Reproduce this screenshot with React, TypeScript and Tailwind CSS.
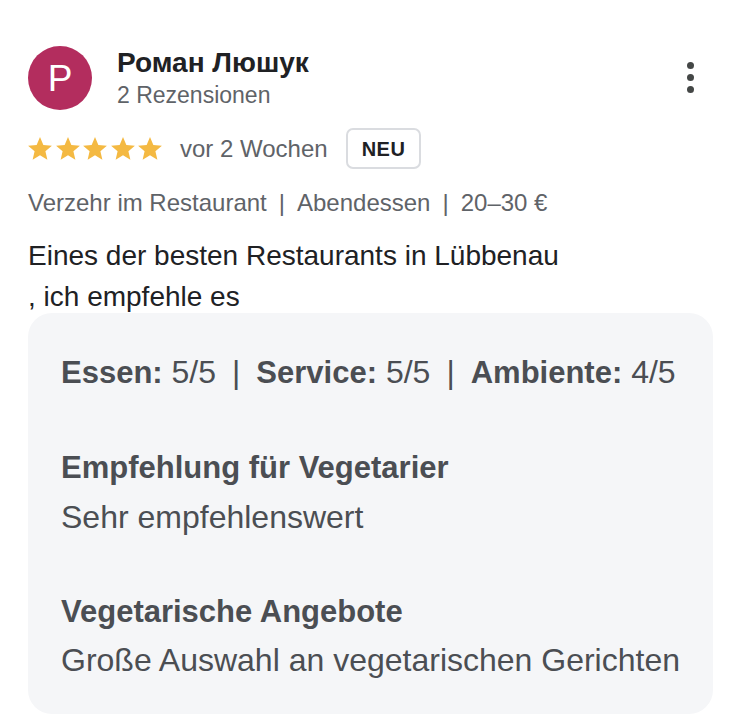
export default function App() {
  const font = { fontFamily: '"Liberation Sans", Arial, sans-serif' };
  return (
    <div className="w-[756px] h-[720px] bg-white overflow-hidden" style={font}>
      <div className="pl-[28px] pr-[43px] pt-[46px]">
        <div className="flex items-start">
          <div className="w-[64px] h-[64px] rounded-full bg-[#b32d5e] flex items-center justify-center text-white text-[37px] leading-none shrink-0">
            P
          </div>
          <div className="ml-[25px] flex-1 pt-[1px]">
            <div className="text-[28px] leading-[32px] font-bold text-[#202124]">Роман Люшук</div>
            <div className="text-[23px] leading-[28px] text-[#5f6368] mt-[2px]">2 Rezensionen</div>
          </div>
          <div className="flex flex-col items-center gap-[5px] pt-[16px] pr-[19px]">
            <span className="w-[7px] h-[7px] rounded-full bg-[#444746]" />
            <span className="w-[7px] h-[7px] rounded-full bg-[#444746]" />
            <span className="w-[7px] h-[7px] rounded-full bg-[#444746]" />
          </div>
        </div>

        <div className="flex items-center mt-[18px]">
          <div className="flex gap-[3.5px]">
            {[0, 1, 2, 3, 4].map((i) => (
              <svg key={i} width="24" height="23" viewBox="2 2 20 19.3">
                <path
                  fill="#f4b942"
                  d="M12 17.27L18.18 21l-1.64-7.03L22 9.24l-7.19-.61L12 2 9.19 8.63 2 9.24l5.46 4.73L5.82 21z"
                />
              </svg>
            ))}
          </div>
          <span className="ml-[18px] text-[24px] text-[#5f6368]">vor 2 Wochen</span>
          <span className="ml-[18px] h-[41px] px-[14px] flex items-center rounded-[7px] border-2 border-[#dadce0] text-[20px] font-bold text-[#202124] tracking-[0.5px]">
            NEU
          </span>
        </div>

        <div className="mt-[20px] flex items-center text-[24px] text-[#5f6368] leading-[28px]">
          <span>Verzehr im Restaurant</span>
          <span className="mx-[12px]">|</span>
          <span>Abendessen</span>
          <span className="mx-[12px]">|</span>
          <span>20–30 €</span>
        </div>

        <div className="mt-[18px] text-[28px] leading-[41px] text-[#202124]">
          Eines der besten Restaurants in Lübbenau
          <br />, ich empfehle es
        </div>

        <div className="-mt-[4px] rounded-[24px] bg-[#f5f6f8] pl-[33px] pr-[20px] pt-[39px] pb-[34px] text-[32px] text-[#4b4e53]">
          <div className="leading-[40px]">
            <span className="font-bold text-[31px]">Essen:</span> 5/5
            <span className="mx-[16px]">|</span>
            <span className="font-bold text-[31px]">Service:</span> 5/5
            <span className="mx-[16px]">|</span>
            <span className="font-bold text-[31px]">Ambiente:</span> 4/5
          </div>
          <div className="mt-[55px] font-bold text-[31px] leading-[40px]">Empfehlung für Vegetarier</div>
          <div className="mt-[9px] leading-[40px]">Sehr empfehlenswert</div>
          <div className="mt-[55px] font-bold text-[31px] leading-[40px]">Vegetarische Angebote</div>
          <div className="mt-[8px] leading-[40px]">Große Auswahl an vegetarischen Gerichten</div>
        </div>
      </div>
    </div>
  );
}
